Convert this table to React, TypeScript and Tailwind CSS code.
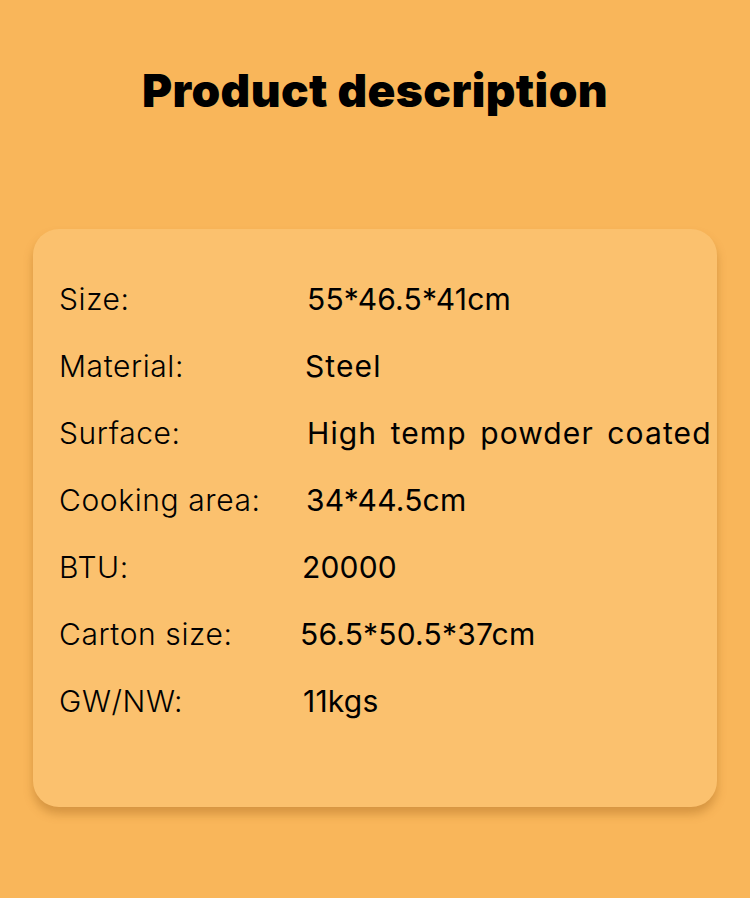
const SPECS: { label: string; value: string; shift: string; num?: boolean }[] = [
  { label: 'Size:', value: '55*46.5*41cm', shift: 'pl-[1px]', num: true },
  { label: 'Material:', value: 'Steel', shift: '-ml-[1px]' },
  { label: 'Surface:', value: 'High temp powder coated', shift: 'pl-[1px]' },
  { label: 'Cooking area:', value: '34*44.5cm', shift: 'pl-0', num: true },
  { label: 'BTU:', value: '20000', shift: '-ml-[4px]', num: true },
  { label: 'Carton size:', value: '56.5*50.5*37cm', shift: '-ml-[6px]', num: true },
  { label: 'GW/NW:', value: '11kgs', shift: '-ml-[3px]', num: true },
]

export default function App() {
  return (
    <div className="min-h-[898px] w-full bg-[#f9b65a] font-['Inter','Noto_Sans',sans-serif] text-black">
      <h1 className="pt-[64px] text-center text-[46px] font-black leading-[52px] tracking-[0.4px]">
        Product description
      </h1>

      <div className="mx-[33px] mt-[113px] rounded-[26px] bg-[#fbc16e] pb-[72px] pl-[26px] pt-[37px] shadow-[0_7px_10px_rgba(150,90,20,0.35)]">
        {SPECS.map((s) => (
          <div key={s.label} className="grid h-[67px] grid-cols-[247px_1fr] items-center">
            <span className="text-[30px] font-light tracking-[0.6px]">{s.label}</span>
            <span
              className={`whitespace-nowrap text-[30px] font-normal ${
                s.num ? 'tracking-[0.2px]' : 'tracking-[1.1px] [word-spacing:4px]'
              } ${s.shift}`}
            >
              {s.value}
            </span>
          </div>
        ))}
      </div>
    </div>
  )
}
